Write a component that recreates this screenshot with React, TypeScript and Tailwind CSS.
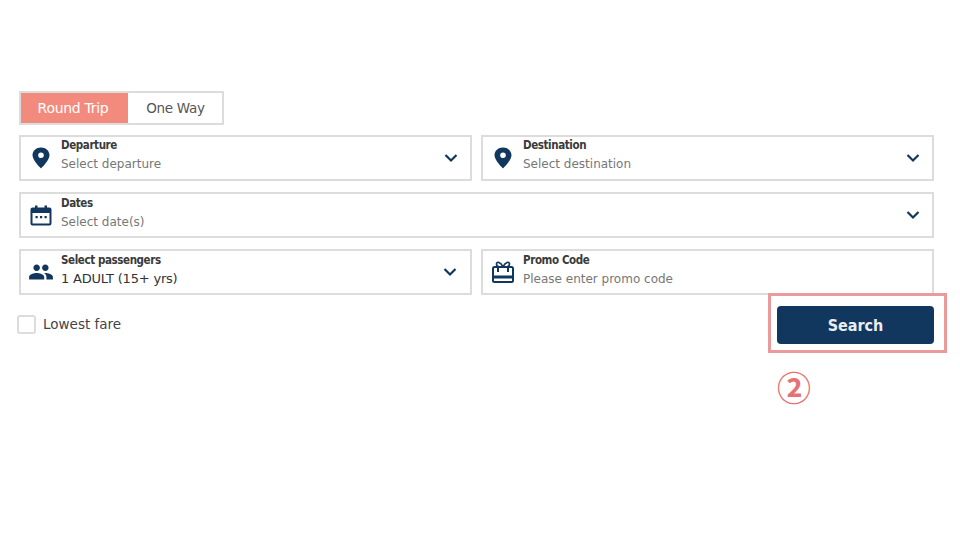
import React from "react";

const Pin = () => (
  <svg width="24" height="24" viewBox="0 0 24 24" fill="#12375f"><path d="M12 1.500C7.200 1.500 3.500 4.800 3.500 9.300c0 5.200 8.500 13.200 8.500 13.200s8.500-8 8.500-13.200C20.500 4.800 16.800 1.500 12 1.500zm0 10.500a2.800 2.800 0 1 1 0-5.600 2.800 2.800 0 0 1 0 5.600z" /></svg>
);
const Chevron = () => (
  <svg width="16" height="10" viewBox="0 0 16 10" fill="none" stroke="#12375f" strokeWidth="2.200"><path d="M2.500 2 8 7.500 13.500 2" /></svg>
);
const Calendar = () => (
  <svg width="24" height="24" viewBox="0 0 24 24" fill="none"><path d="M3.500 5.500h17a1 1 0 0 1 1 1v14a1 1 0 0 1-1 1h-17a1 1 0 0 1-1-1v-14a1 1 0 0 1 1-1z" stroke="#12375f" strokeWidth="2" /><path d="M2.500 5h19v5h-19z" fill="#12375f" /><path d="M6 2.500h2.500V6H6zM15.500 2.500H18V6h-2.500z" fill="#12375f" /><path d="M6.500 13h2.200v2.200H6.500zM11 13h2.200v2.200H11zM15.500 13h2.200v2.200h-2.200z" fill="#12375f" /></svg>
);
const People = () => (
  <svg width="26" height="26" viewBox="0 0 24 24" fill="#12375f"><path d="M16 11c1.700 0 3-1.300 3-3s-1.300-3-3-3-3 1.300-3 3 1.300 3 3 3zm-8 0c1.700 0 3-1.300 3-3S9.700 5 8 5 5 6.300 5 8s1.300 3 3 3zm0 2c-2.300 0-7 1.200-7 3.500V19h14v-2.500C15 14.200 10.300 13 8 13zm8 0c-.3 0-.6 0-1 .100 1.200.8 2 1.900 2 3.400V19h6v-2.500c0-2.300-4.700-3.500-7-3.500z" /></svg>
);
const Gift = () => (
  <svg width="26" height="26" viewBox="0 0 26 26" fill="none" stroke="#12375f" strokeWidth="2"><rect x="3" y="8" width="20" height="15" rx="1.500" /><path d="M3 18h20" strokeWidth="3" /><path d="M8 8v5M18 8v5" /><path d="M13 8C11 3 6.500 2 6.500 5S10.500 8.500 13 8zM13 8c2-5 6.500-6 6.500-3S15.500 8.500 13 8z" strokeWidth="1.700" /></svg>
);

function Field({ icon, label, value, dark, chevron, className, textClass, chevClass }: { icon: React.ReactNode; label: string; value: string; dark?: boolean; chevron?: boolean; className?: string; textClass?: string; chevClass?: string }) {
  return (
    <div className={"flex h-[46px] items-center border-2 border-[#dcdcdc] bg-white " + (className ?? "")}>
      <div className="flex w-[40px] shrink-0 justify-center">{icon}</div>
      <div className={"flex min-w-0 flex-1 flex-col " + (textClass ?? "")}>
        <span className="text-[11.500px] leading-[15px] font-bold tracking-[-0.4px] text-[#3a3a3a] font-['DejaVu_Sans_Condensed','DejaVu_Sans',sans-serif]">{label}</span>
        <span className={dark ? "mt-[3px] text-[13px] leading-[16px] text-[#333] tracking-[-0.2px]" : "mt-[4px] text-[12px] leading-[15px] text-[#777]"}>{value}</span>
      </div>
      {chevron && <div className={"flex items-center " + (chevClass ?? "mr-[11px]")}><Chevron /></div>}
    </div>
  );
}

export default function App() {
  return (
    <div className="relative h-[540px] w-[960px] overflow-hidden bg-white pl-[19px] pr-[26px] pt-[91px] font-['DejaVu_Sans',sans-serif]">
      <div className="flex h-[34px] w-[205px] border-2 border-[#dcdcdc] text-[14px] leading-[30px] tracking-[-0.3px]">
        <div className="flex w-[107px] items-start justify-center bg-[#f28b7d] pb-[2px] pr-[3px] text-white">Round Trip</div>
        <div className="flex flex-1 items-start justify-center bg-white pb-[2px] pl-[1px] text-[13.500px] text-[#555]">One Way</div>
      </div>
      <div className="mt-[10px] flex flex-col gap-[11px]">
        <div className="grid grid-cols-[453px_453px] gap-[9px]">
          <Field icon={<Pin />} label="Departure" value="Select departure" chevron textClass="-mt-[7px]" />
          <Field icon={<Pin />} label="Destination" value="Select destination" chevron textClass="-mt-[7px]" />
        </div>
        <Field icon={<Calendar />} label="Dates" value="Select date(s)" chevron textClass="-mt-[4px]" />
        <div className="grid grid-cols-[453px_453px] gap-[9px]">
          <Field icon={<People />} label="Select passengers" value="1 ADULT (15+ yrs)" dark chevron textClass="-mt-[4px]" chevClass="mr-[12px]" />
          <Field icon={<Gift />} label="Promo Code" value="Please enter promo code" textClass="-mt-[4px]" />
        </div>
      </div>
      <div className="mt-[11px] flex items-start justify-between">
        <label className="-ml-[2px] mt-[8px] flex items-center gap-[7px] text-[13.500px] text-[#444]">
          <span className="h-[19px] w-[19px] rounded-[3px] border-2 border-[#dcdcdc] bg-white" />
          Lowest fare
        </label>
        <div className="relative">
          <button className="flex h-[38px] w-[157px] items-center justify-center rounded-[4px] bg-[#12375f] pt-[1px] text-[16px] font-bold text-[#e8edf2] font-['DejaVu_Sans_Condensed','DejaVu_Sans',sans-serif]">Search</button>
          <div className="absolute -left-[9px] -top-[13px] h-[60px] w-[179px] border-[3px] border-[#ea9a9a]" />
          <div className="absolute left-[0px] top-[59px] text-[34px] leading-[44px] font-bold text-[#e57373] font-['Noto_Sans_CJK_JP','DejaVu_Sans',sans-serif]">②</div>
        </div>
      </div>
    </div>
  );
}
